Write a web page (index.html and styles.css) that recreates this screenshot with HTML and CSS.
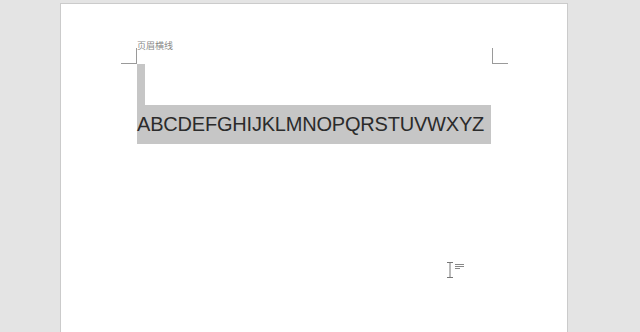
FILE: index.html
```html
<!DOCTYPE html>
<html lang="zh-CN">

<head>
  <meta charset="UTF-8">
  <title>页眉横线</title>
  <link rel="stylesheet" href="styles.css">
</head>

<body>

  <div class="page">
    <div class="header">
      <div class="mark mark-left"></div>
      <div class="header-text">页眉横线</div>
      <div class="mark mark-right"></div>
    </div>

    <div class="body">
      <div class="sel-empty"></div>
      <div class="sel-line">ABCDEFGHIJKLMNOPQRSTUVWXYZ</div>
    </div>

    <div class="cursor">
      <svg width="8" height="16" viewBox="0 0 8 16">
        <path d="M1 0.5h6M1 15.5h6M4 0.5v15" stroke="#777" stroke-width="1" fill="none" />
      </svg>
      <svg width="9" height="6" viewBox="0 0 9 6">
        <path d="M0 0.5h9M0 2.5h9M0 4.5h5" stroke="#888" stroke-width="1" fill="none" />
      </svg>
    </div>
  </div>

</body>

</html>
```

FILE: styles.css
```css
html,
body {
  margin: 0;
  height: 100%;
  overflow: hidden;
}

body {
  font-family: "Liberation Sans", "Noto Sans CJK SC", sans-serif;
  background: #e4e4e4;
  padding: 3px 0 0 60px;
}

.page {
  position: relative;
  width: 508px;
  height: 400px;
  background: #fff;
  border: 1px solid #cbcbcb;
  padding: 35px 0 0 60px;
  box-sizing: border-box;
}

.header {
  display: flex;
  align-items: flex-end;
  height: 25px;
}

.mark {
  width: 15px;
  height: 15px;
  border-bottom: 1px solid #9a9a9a;
}

.mark-left {
  border-right: 1px solid #9a9a9a;
}

.mark-right {
  border-left: 1px solid #9a9a9a;
}

.header-text {
  align-self: flex-start;
  width: 355px;
  margin-top: 2px;
  font-size: 9px;
  line-height: 11px;
  color: #8a8a8a;
}

.body {
  margin-left: 16px;
}

.sel-empty {
  width: 8px;
  height: 41px;
  background: #c6c6c6;
}

.sel-line {
  width: 354px;
  height: 39px;
  line-height: 39px;
  font-size: 20px;
  letter-spacing: -0.2px;
  color: #2b2b2b;
  background: #c6c6c6;
  white-space: nowrap;
}

.cursor {
  position: absolute;
  left: 385px;
  top: 258px;
  display: flex;
  align-items: flex-start;
  gap: 1px;
}

.cursor svg:last-child {
  margin-top: 2px;
}
```
